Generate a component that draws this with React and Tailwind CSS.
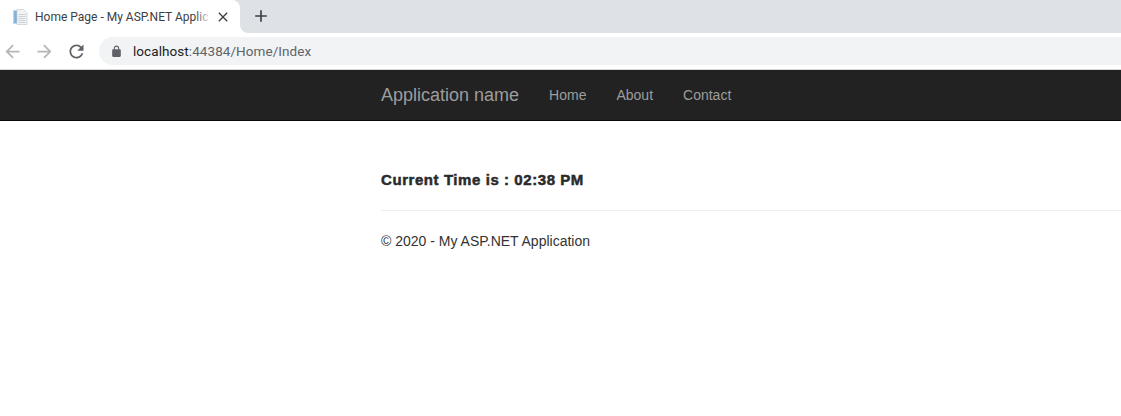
const ICONS = {
  back: "M20 11H7.83l5.59-5.59L12 4l-8 8 8 8 1.41-1.41L7.83 13H20v-2z",
  forward: "M12 4l-1.41 1.41L16.17 11H4v2h12.17l-5.58 5.59L12 20l8-8z",
  reload:
    "M17.65 6.35C16.2 4.9 14.21 4 12 4c-4.42 0-7.99 3.58-7.99 8s3.57 8 7.99 8c3.73 0 6.84-2.55 7.73-6h-2.08c-.82 2.33-3.04 4-5.65 4-3.31 0-6-2.69-6-6s2.69-6 6-6c1.66 0 3.14.69 4.22 1.78L13 11h7V4l-2.35 2.35z",
  lock: "M18 8h-1V6c0-2.76-2.24-5-5-5S7 3.24 7 6v2H6c-1.1 0-2 .9-2 2v10c0 1.1.9 2 2 2h12c1.1 0 2-.9 2-2V10c0-1.1-.9-2-2-2zM9 6c0-1.66 1.34-3 3-3s3 1.34 3 3v2H9V6z",
  close: "M19 6.41L17.59 5 12 10.59 6.41 5 5 6.41 10.59 12 5 17.59 6.41 19 12 13.41 17.59 19 19 17.59 13.41 12z",
  plus: "M19 13h-6v6h-2v-6H5v-2h6V5h2v6h6v2z",
};

function Icon({ name, size, className }) {
  return (
    <svg width={size} height={size} viewBox="0 0 24 24" fill="currentColor" className={className}>
      <path d={ICONS[name]} />
    </svg>
  );
}

function TabIcon() {
  return (
    <svg width="16" height="16" viewBox="0 0 16 16" className="shrink-0">
      <path d="M1 1.5h4v13H1z" fill="#7fb2dc" />
      <path d="M1 1.5h1.2v13H1z" fill="#b9d5ec" />
      <path d="M5 .5h6.5L15 4v11.5H5z" fill="#f1f3f5" stroke="#c6ccd2" strokeWidth="0.7" />
      <path d="M6.5 5.5h7M6.5 7.5h7M6.5 9.5h7M6.5 11.5h7M6.5 13.5h7" stroke="#c3cad0" strokeWidth="0.8" />
    </svg>
  );
}

function BrowserBar() {
  return (
    <div className="font-['Roboto',sans-serif]">
      <div className="flex h-[33px] items-end bg-[#dee1e6]">
        <div className="flex h-[33px] w-[240px] items-center rounded-tr-lg bg-white pl-[12px] pr-[9px]">
          <TabIcon />
          <div className="relative ml-[7px] w-[176px]">
            <span className="block text-[12px] whitespace-nowrap text-[#3c4043]">
              Home Page - My ASP.NET Applic
            </span>
            <div className="absolute inset-y-0 right-0 w-[16px] bg-linear-to-r from-transparent to-white" />
          </div>
          <Icon name="close" size={16} className="ml-auto text-[#3c4043]" />
        </div>
        <div className="h-[8px] w-[8px] bg-white">
          <div className="h-[8px] w-[8px] rounded-bl-lg bg-[#dee1e6]" />
        </div>
        <Icon name="plus" size={20} className="mb-[7px] ml-[3px] text-[#3c4043]" />
      </div>
      <div className="flex h-[37px] items-center border-b border-[#d8d8d8] bg-white">
        <Icon name="back" size={21} className="ml-[2px] text-[#b4b6b9]" />
        <Icon name="forward" size={21} className="ml-[11px] text-[#b4b6b9]" />
        <Icon name="reload" size={21} className="ml-[11px] text-[#5f6368]" />
        <div className="ml-[12px] flex h-[28px] flex-1 items-center rounded-l-full bg-[#f1f3f4] pl-[11px]">
          <Icon name="lock" size={13} className="text-[#5f6368]" />
          <span className="ml-[10px] text-[13.5px] tracking-[0.07px] text-[#5f6368]">
            <span className="text-[#202124]">localhost</span>:44384/Home/Index
          </span>
        </div>
      </div>
    </div>
  );
}

export default function App() {
  return (
    <div className="min-h-[416px] bg-white font-['Liberation_Sans',Arial,sans-serif] text-[14px] text-[#333333]">
      <BrowserBar />
      <nav className="h-[51px] border-b border-[#080808] bg-[#222222]">
        <div className="flex h-[50px] items-center pl-[381px]">
          <a className="text-[18px] text-[#9d9d9d]">Application name</a>
          <ul className="ml-[30px] flex gap-[30px] text-[#9d9d9d]">
            <li>Home</li>
            <li>About</li>
            <li>Contact</li>
          </ul>
        </div>
      </nav>
      <main className="pl-[381px]">
        <h4 className="mt-[50px] text-[15px] leading-[18px] font-bold tracking-[0.57px] text-[#2a2a2a] [-webkit-text-stroke:0.5px_#2a2a2a]">
          Current Time is : 02:38 PM
        </h4>
        <hr className="mt-[21px] border-[#eeeeee]" />
        <p className="mt-[20px] leading-[20px]">© 2020 - My ASP.NET Application</p>
      </main>
    </div>
  );
}
